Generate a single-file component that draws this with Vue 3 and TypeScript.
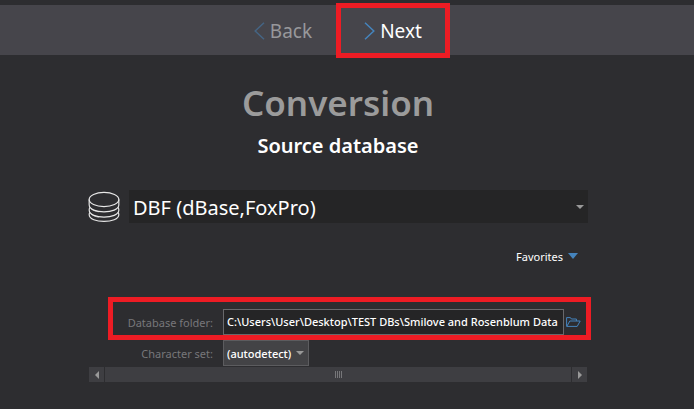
<script setup lang="ts">
import { ref } from 'vue'

const engine = ref('DBF (dBase,FoxPro)')
const folder = ref('C:\\Users\\User\\Desktop\\TEST DBs\\Smilove and Rosenblum Data')
const charset = ref('(autodetect)')
</script>

<template>
  <div class="wizard">
    <nav class="toolbar">
      <button class="step" type="button" disabled>
        <svg class="chevron" width="11" height="18" viewBox="0 0 11 18"><path d="M10 .7 1.200 9l8.800 8.300" /></svg>
        Back
      </button>
      <button class="step marked" type="button">
        <svg class="chevron" width="11" height="18" viewBox="0 0 11 18"><path d="M1 .7 9.800 9 1 17.300" /></svg>
        Next
      </button>
    </nav>

    <div class="body">
      <main class="page">
        <h1 class="title">Conversion</h1>
        <h2 class="subtitle">Source database</h2>

        <div class="engine">
          <svg class="disks" width="32" height="32" viewBox="0 0 33 32">
            <ellipse cx="16.500" cy="8.300" rx="15.300" ry="7.300" />
            <path d="M1.200 8.300v5.500c0 9.700 30.600 9.700 30.600 0V8.300" />
            <path d="M2.200 16.200c-.7.800-1 1.800-1 3 0 9.700 30.600 9.700 30.600 0 0-1.200-.3-2.200-1-3" />
            <path d="M2.200 21.200c-.7.800-1 1.500-1 2.500 0 9.600 30.600 9.600 30.600 0 0-1-.3-1.700-1-2.500" />
            <path class="shine" d="M3 17.500c2 2 5 3 8 3.500M3 23c2 2 5 3 8 3.500" />
          </svg>
          <div class="pick pick-engine">
            <select v-model="engine" aria-label="Source database type">
              <option>DBF (dBase,FoxPro)</option>
            </select>
            <svg class="arrow" width="8" height="4" viewBox="0 0 8 4"><path d="M0 0h8L4 4z" /></svg>
          </div>
        </div>

        <button class="favorites" type="button">
          Favorites
          <svg width="10" height="6" viewBox="0 0 10 6"><path d="M0 0h10L5 6z" /></svg>
        </button>

        <form class="fields" @submit.prevent>
          <div class="row folder-row marked">
            <label for="folder">Database folder:</label>
            <input id="folder" v-model="folder" type="text" spellcheck="false" />
            <button class="browse" type="button" aria-label="Browse">
              <svg width="15" height="10" viewBox="0 0 15 10"><path d="M.6 9.400V.6h3.800l1 1.400h5v2M.8 9.400 3.800 4h10.400l-3 5.400z" /></svg>
            </button>
          </div>
          <div class="row">
            <label for="charset">Character set:</label>
            <div class="pick pick-charset">
              <select id="charset" v-model="charset">
                <option>(autodetect)</option>
              </select>
              <svg class="arrow" width="8" height="4" viewBox="0 0 8 4"><path d="M0 0h8L4 4z" /></svg>
            </div>
          </div>
        </form>

        <div class="scroll">
          <button type="button" aria-label="Scroll left">
            <svg width="4" height="8" viewBox="0 0 4 8"><path d="M4 0v8L0 4z" /></svg>
          </button>
          <div class="thumb"><i></i><i></i><i></i><i></i></div>
          <button type="button" aria-label="Scroll right">
            <svg width="4" height="8" viewBox="0 0 4 8"><path d="M0 0v8l4-4z" /></svg>
          </button>
        </div>
      </main>
    </div>
  </div>
</template>

<style>
body {
  background: #2d2d30;
}
</style>

<style scoped>
.wizard {
  box-sizing: border-box;
  min-height: 100vh;
  padding-top: 5px;
  background: #2d2d30;
  color: #fff;
  font-family: "Noto Sans", "Open Sans", sans-serif;
  font-size: 11px;
}

.wizard * {
  box-sizing: border-box;
}

button,
input,
select {
  margin: 0;
  padding: 0;
  border: 0;
  border-radius: 0;
  background: none;
  color: inherit;
  font: inherit;
  outline: none;
}

svg {
  display: block;
  flex: none;
}

.toolbar {
  display: flex;
  justify-content: center;
  height: 50px;
  padding-right: 18px;
  background: #46454b;
}

.step {
  display: flex;
  align-items: center;
  justify-content: center;
  gap: 5px;
  width: 110px;
  padding-top: 1px;
  font-size: 19px;
}

.step:disabled {
  color: #98989b;
}

.step:disabled .chevron {
  opacity: 0.5;
}

.chevron {
  fill: none;
  stroke: #4584bd;
  stroke-width: 1.5;
}

.marked {
  position: relative;
}

.marked::after {
  content: "";
  position: absolute;
  z-index: 1;
  inset: -2px -2px -3px;
  border: 5px solid #ed1c24;
  pointer-events: none;
}

.body {
  padding: 24px 18px 0 0;
}

.page {
  display: flex;
  flex-direction: column;
  align-items: center;
  max-width: 502px;
  margin: 0 auto;
}

.title {
  margin: 0;
  color: #9b9b9b;
  font-size: 35px;
  font-weight: 600;
  line-height: 48px;
}

.subtitle {
  margin: 5px 0 0;
  font-size: 20px;
  font-weight: 600;
  line-height: 28px;
}

.engine {
  display: flex;
  align-items: center;
  gap: 9px;
  align-self: stretch;
  margin: 30px 1px 0;
}

.disks {
  fill: none;
  stroke: #e8e8e8;
  stroke-width: 1.2;
}

.disks .shine {
  stroke-width: 0.7;
}

.pick {
  position: relative;
}

.pick select {
  display: block;
  width: 100%;
  height: 100%;
  appearance: none;
}

.arrow {
  position: absolute;
  top: 50%;
  right: 4px;
  margin-top: -2px;
  fill: #999;
  pointer-events: none;
}

.pick-engine {
  flex: 1;
  height: 33px;
  background: #252526;
  font-size: 20px;
}

.pick-engine select {
  padding: 2px 16px 0 4px;
}

.favorites {
  display: flex;
  align-items: center;
  gap: 5px;
  align-self: flex-end;
  height: 18px;
  margin: 24px 11px 0 0;
}

.favorites svg {
  fill: #4584bd;
}

.fields {
  width: 100%;
  padding-left: 23px;
  margin-top: 34px;
}

.row {
  display: grid;
  grid-template-columns: 113px 1fr;
  align-items: center;
}

.folder-row {
  grid-template-columns: 113px 1fr 17px;
  padding: 10px 8px 2px 0;
  margin-bottom: 3px;
}

.row label {
  padding-right: 10px;
  color: #77777a;
  text-align: right;
}

#folder {
  width: 100%;
  height: 26px;
  padding: 0 0 2px 3px;
  border: 1px solid #68686b;
  background: #252526;
  font-weight: 500;
}

.browse {
  justify-self: end;
}

.browse svg {
  fill: none;
  stroke: #4584bd;
}

.pick-charset {
  width: 86px;
  height: 26px;
  border: 1px solid #5c5c5f;
  background: #434346;
  font-weight: 500;
}

.pick-charset select {
  padding: 0 14px 0 3px;
}

.scroll {
  display: flex;
  gap: 1px;
  align-self: stretch;
  height: 15px;
  margin: 1px 2px 0;
}

.scroll button,
.thumb {
  display: flex;
  align-items: center;
  justify-content: center;
  background: #3e3e42;
}

.scroll button {
  width: 15px;
}

.scroll svg {
  fill: #999;
}

.thumb {
  flex: 1;
  gap: 1px;
}

.thumb i {
  width: 1px;
  height: 7px;
  background: #77777a;
}
</style>
